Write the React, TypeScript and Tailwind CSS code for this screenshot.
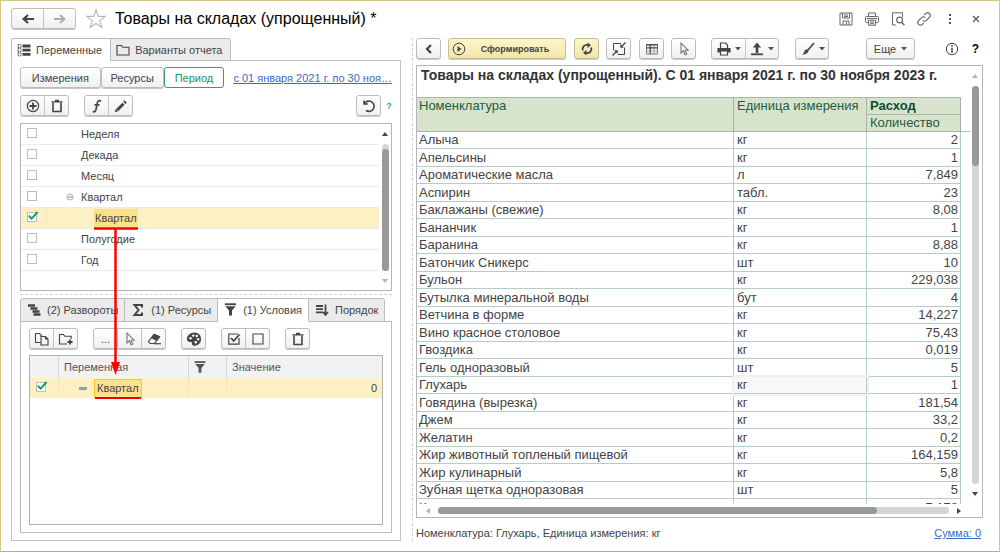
import type { ReactNode } from 'react'
import clsx from 'clsx'

type ReportRow = { name: string; unit: string; qty: string }

const reportRows: ReportRow[] = [
  { name: 'Алыча', unit: 'кг', qty: '2' },
  { name: 'Апельсины', unit: 'кг', qty: '1' },
  { name: 'Ароматические масла', unit: 'л', qty: '7,849' },
  { name: 'Аспирин', unit: 'табл.', qty: '23' },
  { name: 'Баклажаны (свежие)', unit: 'кг', qty: '8,08' },
  { name: 'Бананчик', unit: 'кг', qty: '1' },
  { name: 'Баранина', unit: 'кг', qty: '8,88' },
  { name: 'Батончик Сникерс', unit: 'шт', qty: '10' },
  { name: 'Бульон', unit: 'кг', qty: '229,038' },
  { name: 'Бутылка минеральной воды', unit: 'бут', qty: '4' },
  { name: 'Ветчина в форме', unit: 'кг', qty: '14,227' },
  { name: 'Вино красное столовое', unit: 'кг', qty: '75,43' },
  { name: 'Гвоздика', unit: 'кг', qty: '0,019' },
  { name: 'Гель одноразовый', unit: 'шт', qty: '5' },
  { name: 'Глухарь', unit: 'кг', qty: '1' },
  { name: 'Говядина (вырезка)', unit: 'кг', qty: '181,54' },
  { name: 'Джем', unit: 'кг', qty: '33,2' },
  { name: 'Желатин', unit: 'кг', qty: '0,2' },
  { name: 'Жир животный топленый пищевой', unit: 'кг', qty: '164,159' },
  { name: 'Жир кулинарный', unit: 'кг', qty: '5,8' },
  { name: 'Зубная щетка одноразовая', unit: 'шт', qty: '5' },
  { name: 'Капуста', unit: 'кг', qty: '7,178' },
]

const periods = [
  { id: 'week', label: 'Неделя' },
  { id: 'decade', label: 'Декада' },
  { id: 'month', label: 'Месяц' },
  { id: 'quarter', label: 'Квартал', expanded: true },
  { id: 'quarter-item', label: 'Квартал', child: true },
  { id: 'half-year', label: 'Полугодие' },
  { id: 'year', label: 'Год' },
]

/* ---------- icons ---------- */

function Icon({ size = 16, className, children }: { size?: number; className?: string; children: ReactNode }) {
  return (
    <svg
      width={size}
      height={size}
      viewBox="0 0 16 16"
      fill="none"
      stroke="currentColor"
      strokeWidth="1.2"
      className={clsx('shrink-0', className)}
      aria-hidden="true"
    >
      {children}
    </svg>
  )
}

const TrashIcon = () => (
  <Icon>
    <path d="M4 4.500v9h8v-9" strokeWidth="1.600" />
    <path d="M2.500 3.800h11M6 2.500h4" strokeWidth="1.300" />
  </Icon>
)

const CursorIcon = () => (
  <Icon className="text-[#777]">
    <path d="M5 2v10l2.400-2.200 1.600 4 1.800-.8-1.700-3.800h3z" strokeWidth="1.100" />
  </Icon>
)

const FunnelIcon = ({ size = 14 }: { size?: number }) => (
  <Icon size={size}>
    <path d="M2 2.400h12" strokeWidth="2" />
    <path d="M2.500 4.600h11L9.600 9v5.500H6.400V9z" fill="currentColor" stroke="none" />
  </Icon>
)

const ListIcon = () => (
  <Icon>
    <path d="M2 2.500h3v3H2zM2 6.600h3v3H2zM2 10.800h3v3H2z" strokeDasharray="1 .6" strokeWidth="1" />
    <path d="M6.500 4h8M6.500 8.100h8M6.500 12.300h8" strokeWidth="2.800" />
  </Icon>
)

const FolderIcon = () => (
  <Icon>
    <path d="M2 13V3.500h4.500l1.300 1.800H14V13z" strokeWidth="1.100" />
  </Icon>
)

const Caret = () => (
  <svg width="6" height="4" viewBox="0 0 6 4" aria-hidden="true">
    <path d="M0 0h6L3 3.600z" fill="#555" />
  </svg>
)

function Arrow({ dir, faded }: { dir: 'up' | 'down' | 'left' | 'right'; faded?: boolean }) {
  const paths = { up: 'M0 5h6L3 1z', down: 'M0 1h6L3 5z', left: 'M5 0v6L1 3z', right: 'M1 0v6l4-3z' }
  return (
    <svg width="6" height="6" viewBox="0 0 6 6" aria-hidden="true">
      <path d={paths[dir]} fill={faded ? '#b5b5b5' : '#444'} />
    </svg>
  )
}

/* ---------- controls ---------- */

function Group({ className, children }: { className?: string; children: ReactNode }) {
  return (
    <div
      className={clsx(
        'flex h-[21px] divide-x divide-[#c4c4c4] rounded-[3px] border border-[#bcbcbc] bg-gradient-to-b from-white to-[#f0f0f0] shadow-[0_1px_0_#c9c9c9]',
        className,
      )}
    >
      {children}
    </div>
  )
}

function ToolButton({ label, className, children }: { label: string; className?: string; children: ReactNode }) {
  return (
    <button
      type="button"
      aria-label={label}
      className={clsx('flex flex-1 items-center justify-center text-[#444]', className)}
    >
      {children}
    </button>
  )
}

function CheckBox({ id, label, checked }: { id: string; label?: string; checked?: boolean }) {
  return (
    <span className="relative block size-[10px]">
      <input
        id={id}
        type="checkbox"
        aria-label={label}
        defaultChecked={checked}
        className="peer block size-[10px] appearance-none border border-[#bdbdbd] bg-white"
      />
      <svg
        width="12"
        height="11"
        viewBox="0 0 12 11"
        className="pointer-events-none absolute -top-px left-0 hidden peer-checked:block"
        aria-hidden="true"
      >
        <path d="M1.800 4.600 4.600 7.600 10.600 1" fill="none" stroke="#12a05c" strokeWidth="2" />
      </svg>
    </span>
  )
}

function LowerTab({ active, icon, children }: { active?: boolean; icon: ReactNode; children: ReactNode }) {
  return (
    <button
      type="button"
      role="tab"
      aria-selected={!!active}
      className={clsx(
        'flex items-center gap-[5px] border border-l-0 border-[#bcbcbc] pr-[6px] pb-px pl-[5px] text-[#444] first:rounded-tl-[3px] first:border-l last:rounded-tr-[3px]',
        active ? 'border-b-white bg-white' : 'bg-[#ebebeb]',
      )}
    >
      {icon}
      <span className="whitespace-nowrap">{children}</span>
    </button>
  )
}

/* ---------- window header ---------- */

function WindowHeader() {
  return (
    <header className="flex h-[21px] items-center pr-[15px] pl-[10px]">
      <Group className="w-[65px]">
        <ToolButton label="Назад">
          <Icon>
            <path d="M14 8H4M8 4 3.600 8 8 12" strokeWidth="2.200" />
          </Icon>
        </ToolButton>
        <ToolButton label="Вперед" className="text-[#aaa]">
          <Icon>
            <path d="M2 8h10M8 4l4.400 4L8 12" strokeWidth="1.800" />
          </Icon>
        </ToolButton>
      </Group>
      <button type="button" aria-label="В избранное" className="ml-[9px] text-[#aeb6bf]">
        <Icon size={22}>
          <path d="m8 1.300 1.700 4.800h5L10.700 9.200l1.500 5L8 11.300l-4.200 2.900 1.500-5L1.300 6.100h5z" strokeWidth=".8" />
        </Icon>
      </button>
      <h1 className="ml-2 text-[16px] leading-5 text-black">Товары на складах (упрощенный) *</h1>
      <div className="ml-auto flex items-center gap-[10px] text-[#666]">
        <button type="button" aria-label="Сохранить">
          <Icon>
            <path d="M2 2h12v12H2zM4.500 2v5h7V2M5 14v-4h6v4M6 4h4M6 5.600h4M8.500 11v3" strokeWidth="1" />
          </Icon>
        </button>
        <button type="button" aria-label="Печать">
          <Icon>
            <path
              d="M4.500 5.500V2h7v3.500M4.500 11.500h-2q-1 0-1-1v-4q0-1 1-1h11q1 0 1 1v4q0 1-1 1h-2M4.500 9.200h7v5h-7zM6 11h4M6 12.700h4M3 7.500h10"
              strokeWidth="1"
            />
          </Icon>
        </button>
        <button type="button" aria-label="Предпросмотр">
          <Icon>
            <path d="M6 14H2.500V1.800h10v4" strokeWidth="1" />
            <circle cx="9.600" cy="9" r="2.900" />
            <path d="m11.700 11.200 2.600 2.800" strokeWidth="1.600" />
          </Icon>
        </button>
        <button type="button" aria-label="Ссылка">
          <Icon>
            <path d="M6.600 9.400a2.600 2.600 0 0 0 3.800 0l3-3a2.600 2.600 0 0 0-3.800-3.800L8.200 4M9.400 6.600a2.600 2.600 0 0 0-3.800 0l-3 3a2.600 2.600 0 0 0 3.800 3.800L7.800 12" />
          </Icon>
        </button>
        <button type="button" aria-label="Меню">
          <Icon>
            <path d="M8 3v2M8 7v2M8 11v2" strokeWidth="2" stroke="#555" />
          </Icon>
        </button>
        <button type="button" aria-label="Закрыть">
          <Icon>
            <path d="m5 5 6 6M11 5l-6 6" stroke="#555" />
          </Icon>
        </button>
      </div>
    </header>
  )
}

/* ---------- left side ---------- */

function PeriodList() {
  return (
    <div className="mt-[7px] flex border border-[#b5b5b5] pb-[19px]">
      <table className="flex-1 table-fixed border-separate border-spacing-0">
        <colgroup>
          <col className="w-[25px]" />
          <col />
        </colgroup>
        <tbody>
          {periods.map((p) => (
            <tr key={p.id} className={clsx('h-[21px]', p.child && 'bg-[#fdf0c4]')}>
              <td className="border-b border-[#ebebeb] pb-[2px] pl-[6px]">
                <CheckBox id={p.id} checked={p.child} />
              </td>
              <td
                className={clsx(
                  'relative border-b border-[#ebebeb] p-0',
                  p.child ? 'border-l border-l-[#f7e9bd] pl-[47px]' : 'pl-[35px]',
                )}
              >
                <div className="flex items-center">
                  <span className="flex w-0 justify-end">
                    {p.expanded && (
                      <svg width="8" height="8" viewBox="0 0 8 8" className="mr-[7px] shrink-0" aria-hidden="true">
                        <circle cx="4" cy="4" r="3" fill="none" stroke="#aaa" />
                        <path d="M2 4h4" stroke="#888" />
                      </svg>
                    )}
                  </span>
                  {p.child ? (
                    <label htmlFor={p.id} className="relative bg-[#fbe28a] px-px leading-[18px] text-[#444]">
                      {p.label}
                      <DragArrow />
                    </label>
                  ) : (
                    <label htmlFor={p.id}>{p.label}</label>
                  )}
                </div>
              </td>
            </tr>
          ))}
        </tbody>
      </table>
      <div className="-mb-[19px] flex w-[12px] flex-col items-center pt-[7px] pb-[6px]">
        <Arrow dir="up" />
        <div className="mt-[7px] w-[7px] flex-1 rounded-full bg-[#d5d5d5] pt-[5px]">
          <div className="h-full rounded-full bg-[#999]" />
        </div>
        <div className="mt-[7px]">
          <Arrow dir="down" faded />
        </div>
      </div>
    </div>
  )
}

// Callout that leads from the picked period to its condition below
function DragArrow() {
  return (
    <svg
      width="48"
      height="149"
      viewBox="0 0 48 149"
      className="pointer-events-none absolute top-full left-0 z-10"
      aria-hidden="true"
    >
      <path d="M0 1.500h44" stroke="#f00000" strokeWidth="2.500" />
      <path d="M21.500 2v136" stroke="#ff0000" strokeWidth="2.500" />
      <path d="M17 135h9l-4.500 13z" fill="#ff0000" />
    </svg>
  )
}

function ConditionsPanel() {
  return (
    <div className="flex min-h-0 flex-1 flex-col">
      <div role="tablist" className="relative z-[1] -mb-px flex h-6 pr-3">
        <LowerTab
          icon={
            <Icon>
              <path d="M2 3.500h7M4.500 6.500h7M6.500 9.500h7M7.500 12.500h7" strokeWidth="2.400" />
            </Icon>
          }
        >
          (2) Развороты
        </LowerTab>
        <LowerTab
          icon={
            <Icon>
              <path d="M12 5.500V3H4.500L8.500 8l-4 5H12v-2.500" strokeWidth="2" />
            </Icon>
          }
        >
          (1) Ресурсы
        </LowerTab>
        <LowerTab active icon={<FunnelIcon size={15} />}>
          (1) Условия
        </LowerTab>
        <LowerTab
          icon={
            <Icon>
              <path d="M2 4h7M2 7.200h7M2 10.400h7" strokeWidth="1.800" />
              <path d="M11.500 2.500v10M9 10l2.500 3 2.500-3" strokeWidth="1.700" />
            </Icon>
          }
        >
          Порядок
        </LowerTab>
      </div>
      <div className="flex min-h-0 flex-1 flex-col border border-[#bcbcbc] px-2 pt-[6px] pb-[7px]">
        <div className="flex">
          <Group className="w-[49px]">
            <ToolButton label="Копировать">
              <Icon>
                <path d="M6.500 11.500h-5v-9h4l2 2v1M7 5.500h4.500l2.500 2.500v6H7zM11.500 5.500V8H14" strokeWidth="1.100" />
              </Icon>
            </ToolButton>
            <ToolButton label="Новая группа">
              <Icon>
                <path d="M9 13H1.500V3.500h4l1.200 1.700h6.500V8" strokeWidth="1.100" />
                <path d="M12 8.500v5M9.500 11h5" strokeWidth="1.800" />
              </Icon>
            </ToolButton>
          </Group>
          <Group className="ml-[15px] w-[73px]">
            <ToolButton label="Выбрать">...</ToolButton>
            <ToolButton label="Указать">
              <CursorIcon />
            </ToolButton>
            <ToolButton label="Очистить">
              <Icon>
                <path d="M2.500 10.500 8 3.500l5.500 2.200-5 6.800H4z" />
                <path d="m5.800 6.800 2.500-3.200 5 2.200-2.600 3.500z" fill="currentColor" />
                <path d="M8 12.700h7" />
              </Icon>
            </ToolButton>
          </Group>
          <Group className="ml-[15px] w-[25px]">
            <ToolButton label="Оформление">
              <Icon>
                <path
                  d="M8.500 2C4.500 2 1.500 5 1.500 8c0 2 1.500 2.600 3 2.300 1.600-.3 2 .7 2 2 0 1.300.8 1.900 2 1.900 3.500 0 6-2.700 6-6.200S12 2 8.500 2z"
                  fill="currentColor"
                />
                <g fill="#fff" stroke="none">
                  <circle cx="4.500" cy="7.200" r="1.200" />
                  <circle cx="7.300" cy="4.600" r="1.200" />
                  <circle cx="10.800" cy="5" r="1.200" />
                  <circle cx="12.200" cy="8.300" r="1.200" />
                  <circle cx="9.800" cy="11.300" r="1.200" />
                </g>
              </Icon>
            </ToolButton>
          </Group>
          <Group className="ml-[15px] w-[49px]">
            <ToolButton label="Установить флажки">
              <Icon>
                <path d="M13 7v6.200H2.800V3H12" strokeWidth="1.200" />
                <path d="m5 7 2.700 3L13.500 3.500" strokeWidth="1.800" />
              </Icon>
            </ToolButton>
            <ToolButton label="Снять флажки">
              <Icon>
                <path d="M3 3h10v10H3z" strokeWidth="1.100" />
              </Icon>
            </ToolButton>
          </Group>
          <Group className="ml-[15px] w-[25px]">
            <ToolButton label="Удалить">
              <TrashIcon />
            </ToolButton>
          </Group>
        </div>
        <div className="mt-[6px] flex-1 border border-[#b0b0b0]">
          <table className="w-full table-fixed border-separate border-spacing-0">
            <colgroup>
              <col className="w-[29px]" />
              <col className="w-[130px]" />
              <col className="w-[38px]" />
              <col />
            </colgroup>
            <thead>
              <tr className="h-[22px] bg-[#f2f2f2] text-left text-[#555]">
                <th className="border-r border-[#d5d5d5] p-0" aria-label="Использование" />
                <th className="border-r border-[#d5d5d5] p-0 pl-[5px] font-normal">Переменная</th>
                <th className="border-r border-[#d5d5d5] p-0 pl-1 font-normal" aria-label="Условие">
                  <FunnelIcon />
                </th>
                <th className="p-0 pl-[5px] font-normal">Значение</th>
              </tr>
            </thead>
            <tbody>
              <tr className="h-[20px] bg-[#fdf0c4]">
                <td className="border-r border-[#f7e7b4] p-0 pb-[3px] pl-[6px]">
                  <CheckBox id="condition-quarter" label="Квартал" checked />
                </td>
                <td className="border-r border-[#f7e7b4] p-0 pl-5">
                  <div className="flex items-center gap-[7px]">
                    <span className="h-[3px] w-2 rounded-[1px] border border-[#7f93a8] bg-[#9fb2c4]" />
                    <span className="relative border border-[#ffc81f] bg-[#fbe28a] px-[2px] leading-[17px] text-[#444]">
                      Квартал
                      <span className="absolute top-full left-0 h-[2px] w-full bg-[#f00000]" />
                    </span>
                  </div>
                </td>
                <td className="border-r border-[#f7e7b4] p-0" />
                <td className="p-0 pr-[5px] text-right">0</td>
              </tr>
            </tbody>
          </table>
        </div>
      </div>
    </div>
  )
}

function VariablesPane() {
  return (
    <section className="flex min-h-0 flex-col">
      <div role="tablist" className="relative z-[1] -mb-px flex h-[23px]">
        <button
          type="button"
          role="tab"
          aria-selected="true"
          className="flex items-center gap-1 rounded-tl-[3px] border border-[#bcbcbc] border-b-white bg-white pr-2 pl-1"
        >
          <ListIcon />
          Переменные
        </button>
        <button
          type="button"
          role="tab"
          aria-selected="false"
          className="flex items-center gap-1 rounded-tr-[3px] border border-l-0 border-[#bcbcbc] bg-[#ebebeb] pr-2 pl-1"
        >
          <FolderIcon />
          Варианты отчета
        </button>
      </div>
      <div className="flex min-h-0 flex-1 flex-col border border-[#c4c4c4] px-2 pt-[6px] pb-[7px]">
        <div className="flex items-center">
          <Group className="w-[81px]">
            <ToolButton label="Измерения">Измерения</ToolButton>
          </Group>
          <Group className="w-[63px]">
            <ToolButton label="Ресурсы">Ресурсы</ToolButton>
          </Group>
          <button
            type="button"
            className="h-[21px] w-[61px] rounded-[3px] border border-[#3c9a6a] bg-white text-[#27935a]"
          >
            Период
          </button>
          <a href="#period" className="ml-[9px] whitespace-nowrap text-[#3a6cc4] underline">
            с 01 января 2021 г. по 30 ноя…
          </a>
        </div>
        <div className="mt-[7px] flex items-center">
          <Group className="w-[49px]">
            <ToolButton label="Добавить">
              <Icon>
                <circle cx="8" cy="8" r="5.600" />
                <path d="M8 4.500v7M4.500 8h7" strokeWidth="1.800" />
              </Icon>
            </ToolButton>
            <ToolButton label="Удалить">
              <TrashIcon />
            </ToolButton>
          </Group>
          <Group className="ml-[15px] w-[49px]">
            <ToolButton label="Формула">
              <Icon>
                <path d="M12 3.200c-2.200-1.400-3.300 0-3.700 2L7 11.500c-.5 2-1.500 2.800-3.300 2M5.500 6.800h5" strokeWidth="1.700" />
              </Icon>
            </ToolButton>
            <ToolButton label="Изменить">
              <Icon>
                <path d="m4 12.200 6.500-6.500" strokeWidth="3" />
                <path d="m11.300 4.900 1.400-1.400" strokeWidth="3.200" />
                <path d="m1.800 14.200.8-3 2.200 2.200z" fill="currentColor" stroke="none" />
              </Icon>
            </ToolButton>
          </Group>
          <Group className="ml-auto w-[25px]">
            <ToolButton label="Обновить">
              <Icon>
                <path d="M3.500 5.500A5.200 5.200 0 1 1 5 12.500" strokeWidth="1.600" />
                <path d="M3 2.500V6h3.800" strokeWidth="1.600" />
              </Icon>
            </ToolButton>
          </Group>
          <button type="button" className="-mr-[5px] w-[16px] text-[9px] font-bold text-[#2f8fd0]">
            ?
          </button>
        </div>
        <PeriodList />
        <div className="my-[3px] border-t border-dashed border-[#d5d5d5]" />
        <ConditionsPanel />
      </div>
    </section>
  )
}

/* ---------- right side ---------- */

function ReportToolbar() {
  return (
    <div className="flex items-center">
      <Group className="w-[25px]">
        <ToolButton label="Скрыть настройки">
          <Icon>
            <path d="M10 4 6 8l4 4" strokeWidth="2.200" />
          </Icon>
        </ToolButton>
      </Group>
      <button
        type="button"
        className="ml-[7px] flex h-[21px] w-[118px] items-center rounded-[3px] border border-[#c9bf8c] bg-gradient-to-b from-[#fcf6c8] to-[#f1e6a8] px-[3px] text-[9px] font-bold text-[#444] shadow-[0_1px_0_#c9c9c9]"
      >
        <Icon>
          <circle cx="7" cy="8" r="5.800" strokeWidth="1" />
          <path d="M5.500 5v6l4-3z" fill="currentColor" stroke="none" />
        </Icon>
        <span className="flex-1 text-center">Сформировать</span>
      </button>
      <button
        type="button"
        aria-label="Обновить отчет"
        className="ml-2 flex h-[21px] w-[25px] items-center justify-center rounded-[3px] border border-[#c9bf8c] bg-gradient-to-b from-[#fcf6c8] to-[#f1e6a8] text-[#444] shadow-[0_1px_0_#c9c9c9]"
      >
        <Icon>
          <path d="M3.800 9.500A4.300 4.300 0 0 1 9 4M12.200 6.500A4.300 4.300 0 0 1 7 12" strokeWidth="1.800" />
          <path d="M8.500 1.500 12 4.300 8.500 7zM7.500 9 4 11.800l3.500 2.700z" fill="currentColor" stroke="none" />
        </Icon>
      </button>
      <Group className="ml-[7px] w-[25px]">
        <ToolButton label="Свернуть">
          <Icon>
            <path d="M10 2.500H2.500V9M13.500 6.500v7H7" strokeWidth="1" />
            <path d="m14.500 1.500-4 4M1.500 14.500l4-4" strokeWidth="1.400" />
            <path d="M9.300 3v3.700H13zM6.700 13V9.300H3z" fill="currentColor" stroke="none" />
          </Icon>
        </ToolButton>
      </Group>
      <Group className="ml-2 w-[25px]">
        <ToolButton label="Таблица">
          <Icon>
            <path d="M2.500 3.500h11v9.500h-11z" strokeWidth="1" stroke="#777" />
            <path d="M2.500 10h11M10 3.500V13" strokeWidth="1" stroke="#aaa" />
            <path d="M2 3.800h12M2.500 6.800h11M6.200 3.500V13" strokeWidth="1.200" />
          </Icon>
        </ToolButton>
      </Group>
      <Group className="ml-[7px] w-[25px]">
        <ToolButton label="Указатель">
          <CursorIcon />
        </ToolButton>
      </Group>
      <Group className="ml-[15px] w-[68px]">
        <ToolButton label="Печать" className="gap-[3px]">
          <Icon>
            <path d="M4.500 7V2h5l2 2v3" />
            <path d="M2 7.500h12v3.500H2z" fill="currentColor" />
            <path d="M4.500 10h7v4h-7z" fill="#fff" />
          </Icon>
          <Caret />
        </ToolButton>
        <ToolButton label="Выгрузить" className="gap-[3px]">
          <Icon>
            <path d="M8 12V5" strokeWidth="2.600" />
            <path d="M3.800 6.500 8 1.500l4.200 5z" fill="currentColor" stroke="none" />
            <path d="M2 13.300h12" strokeWidth="1.800" />
          </Icon>
          <Caret />
        </ToolButton>
      </Group>
      <Group className="ml-4 w-[34px]">
        <ToolButton label="Стиль" className="gap-[3px]">
          <Icon>
            <path d="m14 2-6 7" strokeWidth="1.700" />
            <path
              d="M8.600 8.800c.6 2.600-2.600 4.800-6.600 5 1.600-1 1.800-1.800 2.200-3.200.7-2.300 2.600-3.200 4.400-1.800z"
              fill="currentColor"
              stroke="none"
            />
          </Icon>
          <Caret />
        </ToolButton>
      </Group>
      <Group className="ml-auto w-[49px]">
        <ToolButton label="Еще" className="gap-[5px]">
          Еще
          <Caret />
        </ToolButton>
      </Group>
      <button type="button" aria-label="Информация" className="ml-[29px] text-[#444]">
        <Icon>
          <circle cx="8" cy="8" r="5.700" strokeWidth="1" />
          <path d="M8 4.200v1.600M8 6.800v5" strokeWidth="1.500" />
        </Icon>
      </button>
      <button type="button" className="ml-2 w-[15px] text-center text-[12px] font-bold text-black">
        ?
      </button>
    </div>
  )
}

function ReportTable() {
  return (
    <table className="w-full table-fixed border-separate border-spacing-0 text-[13px] leading-4 text-[#444]">
      <colgroup>
        <col />
        <col className="w-[133px]" />
        <col className="w-[94px]" />
      </colgroup>
      <thead className="text-left whitespace-nowrap text-[#1f5c46]">
        <tr className="h-[18px] bg-[#d7e4cb]">
          <th rowSpan={2} className="border-t border-r border-b border-[#a9b5a9] p-0 pl-[2px] align-top font-normal">
            Номенклатура
          </th>
          <th rowSpan={2} className="border-t border-r border-b border-[#a9b5a9] p-0 pl-[3px] align-top font-normal">
            Единица измерения
          </th>
          <th className="border-t border-r border-b border-[#a9b5a9] p-0 pl-[3px] font-bold text-[#0f4a38]">Расход</th>
        </tr>
        <tr className="h-[17px] bg-[#d7e4cb]">
          <th className="border-r border-b border-[#a9b5a9] p-0 pl-[3px] font-normal">Количество</th>
        </tr>
      </thead>
      <tbody>
        {reportRows.map((row) => (
          <tr key={row.name} className="odd:h-[17px] even:h-[18px]">
            <td className="border-r border-b border-[#b3cfc5] p-0 pl-[2px]">{row.name}</td>
            <td
              className={clsx(
                'border-r border-b border-[#b3cfc5] p-0 pl-[3px]',
                row.name === 'Глухарь' && 'bg-[#f8f8f8] outline-2 outline-[#f1f1f1]',
              )}
            >
              {row.unit}
            </td>
            <td className="border-r border-b border-[#b3cfc5] p-0 pr-[2px] text-right">{row.qty}</td>
          </tr>
        ))}
      </tbody>
    </table>
  )
}

function ReportPane() {
  return (
    <section className="flex min-h-0 flex-col">
      <ReportToolbar />
      <div className="mt-[6px] flex min-h-0 flex-1 flex-col border border-[#b5b5b5]">
        <div className="flex min-h-0 flex-1">
          <div className="min-w-0 flex-1 overflow-hidden">
            <h2 className="h-[31px] pt-px pl-1 text-[14px] leading-[17px] font-bold whitespace-nowrap text-[#333]">
              Товары на складах (упрощенный). С 01 января 2021 г. по 30 ноября 2023 г.
            </h2>
            <ReportTable />
          </div>
          <div className="flex w-[21px] flex-col">
            <div className="h-[66px] w-[9px] shrink-0 border-b border-[#bcbcbc]" />
            <div className="-mt-[66px] flex flex-1 flex-col items-center pt-[7px] pb-[7px] pl-[7px]">
              <Arrow dir="up" faded />
              <div className="my-[7px] w-[7px] flex-1 rounded-full bg-[#d5d5d5]">
                <div className="h-1/5 rounded-full bg-[#999]" />
              </div>
              <Arrow dir="down" />
            </div>
          </div>
        </div>
        <div className="flex h-[13px] items-center gap-[7px] pr-[20px] pl-2">
          <Arrow dir="left" faded />
          <div className="h-[7px] flex-1 rounded-full bg-[#d5d5d5]">
            <div className="h-full w-[86%] rounded-full bg-[#999]" />
          </div>
          <Arrow dir="right" />
        </div>
      </div>
      <footer className="flex h-[23px] items-end justify-between pr-[2px]">
        <span>Номенклатура: Глухарь, Единица измерения: кг</span>
        <a href="#sum" className="text-[#3a6cc4] underline">
          Сумма: 0
        </a>
      </footer>
    </section>
  )
}

export default function App() {
  return (
    <div className="flex h-screen flex-col border border-[#d3c684] border-b-[#aaa] bg-white pt-[7px] pb-[10px] font-['Liberation_Sans',Arial,sans-serif] text-[11px] leading-4 text-[#444]">
      <WindowHeader />
      <main className="mt-[9px] grid min-h-0 flex-1 grid-cols-[minmax(0,390fr)_15px_minmax(0,567fr)] grid-rows-[minmax(0,1fr)] pr-4 pl-[10px]">
        <VariablesPane />
        <div className="ml-[11px] border-l border-dashed border-[#d0d0d0]" />
        <ReportPane />
      </main>
    </div>
  )
}
